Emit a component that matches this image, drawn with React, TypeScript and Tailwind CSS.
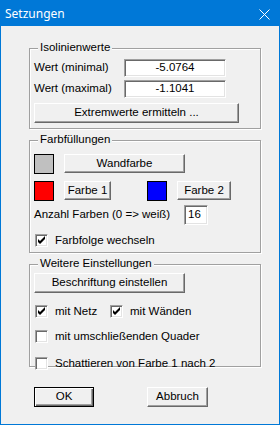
import type { ReactNode } from 'react';

const font = { fontFamily: '"Liberation Sans", Arial, sans-serif' };

function Btn({ w, h = 20, def, children }: { w: number; h?: number; def?: boolean; children: ReactNode }) {
  return (
    <div
      className={
        def
          ? 'flex items-center justify-center bg-[#f0f0f0] border border-black shadow-[inset_1px_1px_0_#fff,inset_-1px_-1px_0_#696969,inset_-2px_-2px_0_#a0a0a0] text-[11.5px] text-black'
          : 'flex items-center justify-center bg-[#f0f0f0] border border-t-white border-l-white border-r-[#696969] border-b-[#696969] shadow-[inset_-1px_-1px_0_#a0a0a0] text-[11.5px] text-black'
      }
      style={{ width: w, height: h }}
    >
      {children}
    </div>
  );
}

function Field({ w, h, value, center = true }: { w: number; h: number; value: string; center?: boolean }) {
  return (
    <div
      className={`flex items-center bg-white border border-t-[#a0a0a0] border-l-[#a0a0a0] border-r-white border-b-white shadow-[inset_1px_1px_0_#696969,inset_-1px_-1px_0_#e3e3e3] text-[11.5px] text-black ${center ? 'justify-center' : 'pl-[3px]'}`}
      style={{ width: w, height: h }}
    >
      {value}
    </div>
  );
}

function Check({ on }: { on?: boolean }) {
  return (
    <div className="w-[13px] h-[13px] shrink-0 bg-white border border-t-[#a0a0a0] border-l-[#a0a0a0] border-r-white border-b-white shadow-[inset_1px_1px_0_#696969,inset_-1px_-1px_0_#e3e3e3] flex items-center justify-center">
      {on && (
        <svg width="11" height="11" viewBox="0 0 11 11">
          <path d="M2 4 L4 6 L9 1 L9 4 L4 9 L2 7 Z" fill="#000" />
        </svg>
      )}
    </div>
  );
}

function Group({ title, h, children, pt }: { title: string; h: number; pt: number; children: ReactNode }) {
  return (
    <div
      className="relative ml-[28px] w-[232px] border border-[#a0a0a0] shadow-[inset_1px_1px_0_#fff,1px_1px_0_#fff] pl-[4px]"
      style={{ height: h, paddingTop: pt }}
    >
      <span className="absolute left-[8px] top-[-8px] bg-[#f0f0f0] px-[2px] text-[11.5px] leading-[13px] text-black">
        {title}
      </span>
      {children}
    </div>
  );
}

function Swatch({ color }: { color: string }) {
  return <div className="w-[20px] h-[20px] border border-black shrink-0" style={{ background: color }} />;
}

export default function App() {
  return (
    <div className="w-[280px] h-[425px] bg-[#f0f0f0] border border-[#0078d7] flex flex-col" style={font}>
      {/* title bar */}
      <div className="h-[25px] bg-[#0078d7] flex items-center justify-between pl-[4px] pr-[9px] shrink-0">
        <span className="text-white text-[12px]" style={{ fontFamily: '"Noto Sans", "Open Sans", sans-serif' }}>
          Setzungen
        </span>
        <svg width="11" height="11" viewBox="0 0 11 11" className="mt-[1px]">
          <path d="M0.5 0.5 L10.5 10.5 M10.5 0.5 L0.5 10.5" stroke="#fff" strokeWidth="1" />
        </svg>
      </div>

      <div className="mt-[22px]">
        <Group title="Isolinienwerte" h={81} pt={10}>
          <div className="flex items-center">
            <span className="w-[90px] text-[11.5px] text-black">Wert (minimal)</span>
            <Field w={102} h={18} value="-5.0764" />
          </div>
          <div className="flex items-center mt-[3px]">
            <span className="w-[90px] text-[11.5px] text-black">Wert (maximal)</span>
            <Field w={102} h={18} value="-1.1041" />
          </div>
          <div className="mt-[5px]">
            <Btn w={205}>Extremwerte ermitteln ...</Btn>
          </div>
        </Group>
      </div>

      <div className="mt-[11px]">
        <Group title="Farbfüllungen" h={113} pt={13}>
          <div className="flex items-start">
            <Swatch color="#c0c0c0" />
            <div className="ml-[10px]">
              <Btn w={121} h={19}>Wandfarbe</Btn>
            </div>
          </div>
          <div className="flex items-start mt-[7px]">
            <Swatch color="#ff0000" />
            <div className="ml-[10px]">
              <Btn w={47} h={19}>Farbe 1</Btn>
            </div>
            <div className="ml-[36px]">
              <Swatch color="#0000ff" />
            </div>
            <div className="ml-[10px]">
              <Btn w={54} h={19}>Farbe 2</Btn>
            </div>
          </div>
          <div className="flex items-center mt-[4px]">
            <span className="w-[150px] text-[11.5px] text-black">Anzahl Farben (0 =&gt; weiß)</span>
            <Field w={24} h={20} value="16" center={false} />
          </div>
          <div className="flex items-center mt-[7px] ml-[1px]">
            <Check on />
            <span className="ml-[7px] text-[11.5px] text-black">Farbfolge wechseln</span>
          </div>
        </Group>
      </div>

      <div className="mt-[11px]">
        <Group title="Weitere Einstellungen" h={103} pt={8}>
          <Btn w={151}>Beschriftung einstellen</Btn>
          <div className="flex items-center mt-[10px] ml-[1px]">
            <Check on />
            <span className="ml-[7px] w-[55px] text-[11.5px] text-black">mit Netz</span>
            <Check on />
            <span className="ml-[7px] text-[11.5px] text-black">mit Wänden</span>
          </div>
          <div className="flex items-center mt-[8px] ml-[1px]">
            <Check />
            <span className="ml-[7px] text-[11.5px] text-black">mit umschließenden Quader</span>
          </div>
          <div className="flex items-center mt-[9px] ml-[1px]">
            <Check />
            <span className="ml-[7px] text-[11.5px] text-black">Schattieren von Farbe 1 nach 2</span>
          </div>
        </Group>
      </div>

      <div className="flex mt-[20px] ml-[33px]">
        <Btn w={60} def>OK</Btn>
        <div className="ml-[53px]">
          <Btn w={61}>Abbruch</Btn>
        </div>
      </div>
    </div>
  );
}
